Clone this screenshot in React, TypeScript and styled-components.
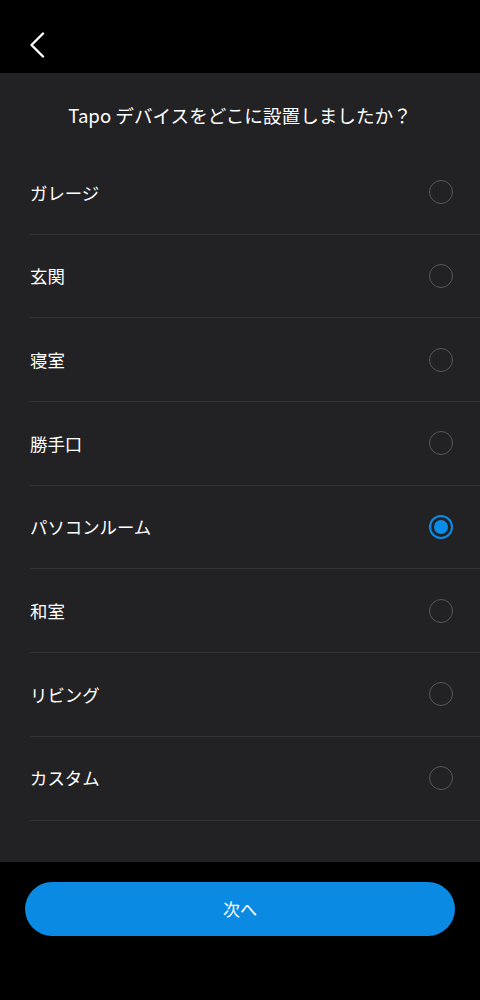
import { useState } from "react";
import styled, { createGlobalStyle } from "styled-components";

const GlobalStyle = createGlobalStyle`
  html, body {
    margin: 0;
    padding: 0;
    background: #000000;
  }
  body {
    font-family: "Noto Sans CJK JP", "Noto Sans", sans-serif;
    -webkit-font-smoothing: antialiased;
  }
`;

const ROOMS = [
  "ガレージ",
  "玄関",
  "寝室",
  "勝手口",
  "パソコンルーム",
  "和室",
  "リビング",
  "カスタム",
];

const App = () => {
  const [selected, setSelected] = useState(4);

  return (
    <>
      <GlobalStyle />
      <Page>
        <Header>
          <BackButton aria-label="戻る">
            <svg width="16" height="26" viewBox="0 0 16 26" fill="none">
              <path
                d="M14 1.5L2.5 13L14 24.5"
                stroke="#ffffff"
                strokeWidth="2.4"
                strokeLinecap="round"
                strokeLinejoin="round"
              />
            </svg>
          </BackButton>
        </Header>

        <Panel>
          <TitleWrapper>
            <Title>Tapo デバイスをどこに設置しましたか？</Title>
          </TitleWrapper>

          <List>
            {ROOMS.map((room, i) => (
              <Row key={room} onClick={() => setSelected(i)}>
                <RowLabel>{room}</RowLabel>
                <Radio $checked={selected === i} />
              </Row>
            ))}
          </List>
        </Panel>

        <Footer>
          <NextButton>次へ</NextButton>
        </Footer>
      </Page>
    </>
  );
};

export default App;

const Page = styled.div`
  display: flex;
  flex-direction: column;
  width: 480px;
  height: 1000px;
  background: #000000;
`;

const Header = styled.header`
  display: flex;
  align-items: center;
  height: 73px;
  padding-left: 29px;
  box-sizing: border-box;
  background: #000000;
`;

const BackButton = styled.button`
  display: flex;
  align-items: center;
  padding: 0;
  margin-top: 17px;
  border: none;
  background: none;
  cursor: pointer;
`;

const Panel = styled.main`
  display: flex;
  flex-direction: column;
  padding-bottom: 41px;
  background: #222224;
`;

const TitleWrapper = styled.div`
  display: flex;
  align-items: center;
  justify-content: center;
  height: 78px;
  padding-top: 6px;
  box-sizing: border-box;
`;

const Title = styled.h1`
  margin: 0;
  font-size: 18.6px;
  font-weight: 400;
  line-height: 1.4;
  color: #ffffff;
`;

const List = styled.ul`
  margin: 0;
  padding: 0 0 0 30px;
  list-style: none;
`;

const Row = styled.li`
  display: flex;
  align-items: center;
  justify-content: space-between;
  height: 83.7px;
  padding-right: 27px;
  box-sizing: border-box;
  border-bottom: 1px solid #343437;
  cursor: pointer;
`;

const RowLabel = styled.span`
  font-size: 17.4px;
  line-height: 1;
  color: #ffffff;
`;

const Radio = styled.span<{ $checked: boolean }>`
  position: relative;
  width: 24px;
  height: 24px;
  box-sizing: border-box;
  border-radius: 50%;
  border: ${({ $checked }) =>
    $checked ? "2px solid #0a8de9" : "1.5px solid #58585b"};

  &::after {
    content: "";
    display: ${({ $checked }) => ($checked ? "block" : "none")};
    position: absolute;
    top: 3px;
    left: 3px;
    width: 14px;
    height: 14px;
    border-radius: 50%;
    background: #0a8de9;
  }
`;

const Footer = styled.footer`
  display: flex;
  padding: 20px 25px 0;
`;

const NextButton = styled.button`
  flex: 1;
  height: 54px;
  border: none;
  border-radius: 27px;
  background: #0a8ae3;
  color: #ffffff;
  font-family: "Noto Sans CJK JP", "Noto Sans", sans-serif;
  font-size: 17px;
  cursor: pointer;
`;
